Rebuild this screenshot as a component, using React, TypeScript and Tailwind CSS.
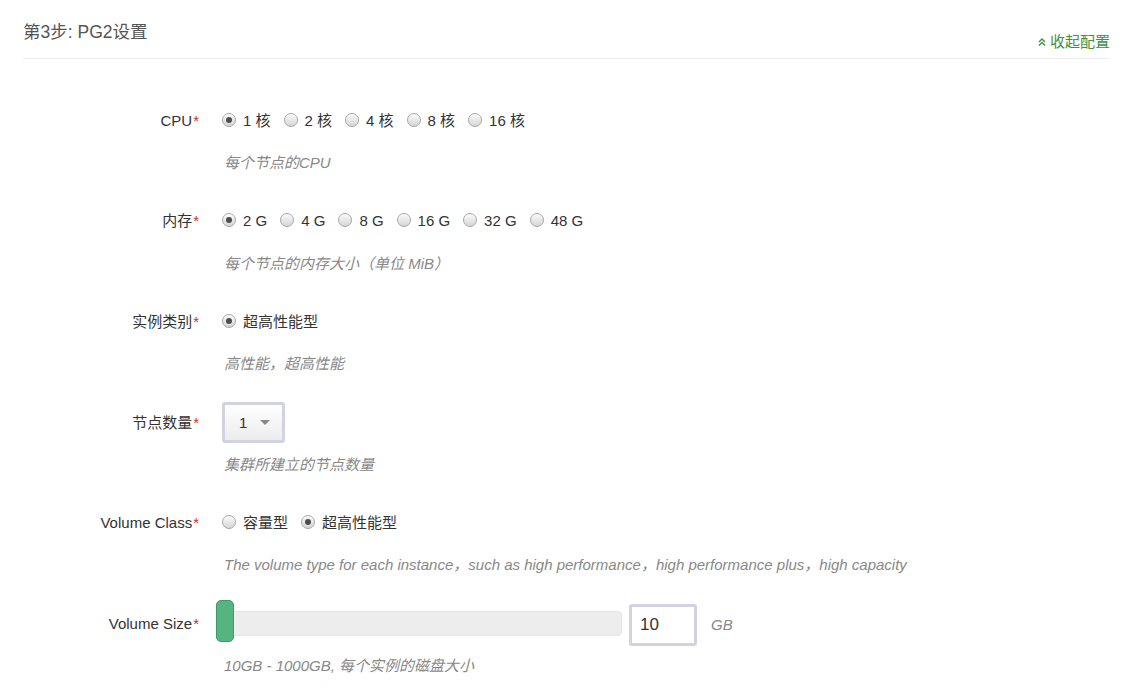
import React from "react";

const font = { fontFamily: '"Liberation Sans", Arial, "Noto Sans CJK SC", sans-serif' };

function Radio({ checked, label }: { checked?: boolean; label: string }) {
  return (
    <label className="flex items-center mr-[13px]">
      <span className="relative w-[14px] h-[14px] rounded-full border border-[#a6a6a6] bg-gradient-to-b from-[#fafafa] to-[#d6d6d6] flex items-center justify-center shadow-[inset_0_1px_1px_rgba(255,255,255,0.8)] -mt-[3px]">
        {checked && <span className="w-[6px] h-[6px] rounded-full bg-[#4d4d4d]" />}
      </span>
      <span className="ml-[7px] text-[15px] text-[#333]">{label}</span>
    </label>
  );
}

function Row({ label, help, children }: { label: string; help: string; children: React.ReactNode }) {
  return (
    <div className="flex mb-[27.6px]">
      <div className="w-[199px] h-[42px] flex items-center justify-end text-[15px] text-[#333]">
        {label}
        <span className="text-[#c9302c] ml-[1px]">*</span>
      </div>
      <div className="ml-[23px] flex flex-col">
        <div className="h-[42px] flex items-center">{children}</div>
        <div className="mt-[11px] leading-[20px] text-[15px] text-[#888] ml-[2px] italic">{help}</div>
      </div>
    </div>
  );
}

export default function App() {
  return (
    <div className="w-[1128px] h-[699px] bg-white overflow-hidden" style={font}>
      <div className="ml-[23px] mr-[18px] h-[59px] flex justify-between border-b border-[#eeeeee]">
        <div className="mt-[20px] leading-[24px] text-[17.5px] text-[#555]">第3步: PG2设置</div>
        <div className="mt-[26px] leading-[18px] text-[15px] text-[#3d9140] flex items-center">
          <svg width="10" height="10" viewBox="0 0 10 10" className="mr-[3px]" fill="none" stroke="#3d9140" strokeWidth="1.4">
            <path d="M2 5 L5 2 L8 5" />
            <path d="M2 8.5 L5 5.5 L8 8.5" />
          </svg>
          收起配置
        </div>
      </div>
      <div className="pt-[41px]">
        <Row label="CPU" help="每个节点的CPU">
          <Radio checked label="1 核" />
          <Radio label="2 核" />
          <Radio label="4 核" />
          <Radio label="8 核" />
          <Radio label="16 核" />
        </Row>
        <Row label="内存" help="每个节点的内存大小（单位 MiB）">
          <Radio checked label="2 G" />
          <Radio label="4 G" />
          <Radio label="8 G" />
          <Radio label="16 G" />
          <Radio label="32 G" />
          <Radio label="48 G" />
        </Row>
        <Row label="实例类别" help="高性能，超高性能">
          <Radio checked label="超高性能型" />
        </Row>
        <Row label="节点数量" help="集群所建立的节点数量">
          <div className="w-[63px] h-[41px] rounded-[3px] border-[3px] border-[#d3d2e0] bg-gradient-to-b from-white to-[#ececec] flex items-center pl-[14px]">
            <span className="text-[15px] text-[#333]">1</span>
            <svg width="10" height="6" viewBox="0 0 10 6" className="ml-[13px]">
              <path d="M0 0 L10 0 L5 5 Z" fill="#888" />
            </svg>
          </div>
        </Row>
        <Row label="Volume Class" help="The volume type for each instance，such as high performance，high performance plus，high capacity">
          <Radio label="容量型" />
          <Radio checked label="超高性能型" />
        </Row>
        <Row label="Volume Size" help="10GB - 1000GB, 每个实例的磁盘大小">
          <div className="flex items-center -ml-[6px]">
            <div className="relative w-[407px] h-[42px] flex items-center">
              <div className="ml-[6px] w-[400px] h-[25px] rounded-[4px] bg-[#ededed] border border-[#e6e6e6]" />
              <div className="absolute left-0 top-[-3px] w-[18px] h-[42px] rounded-[5px] bg-[#56b480] border border-[#3d9a66]" />
            </div>
            <div className="ml-[6px] w-[68px] h-[42px] rounded-[3px] border-[3px] border-[#d3d2e0] bg-white flex items-center pl-[8px] text-[17px] text-[#333] mt-[2px]">
              10
            </div>
            <span className="ml-[14px] text-[15px] italic text-[#888] mt-[2px]">GB</span>
          </div>
        </Row>
      </div>
    </div>
  );
}
